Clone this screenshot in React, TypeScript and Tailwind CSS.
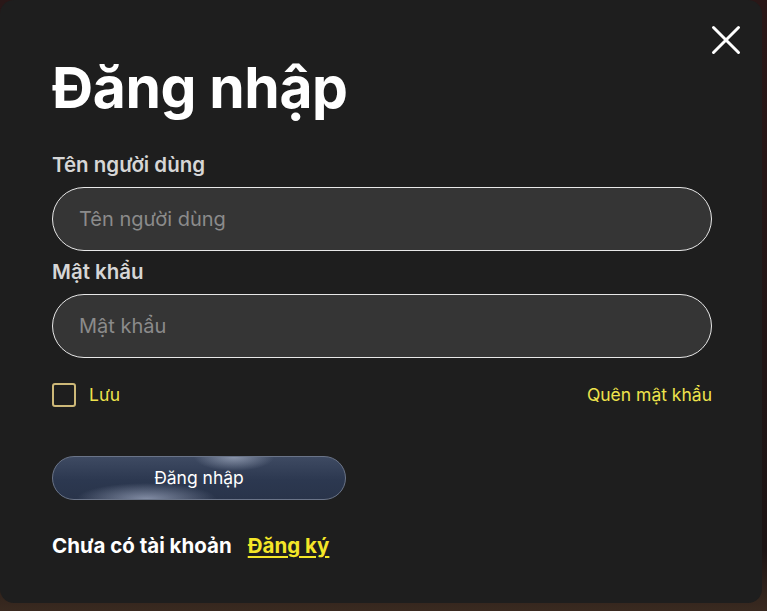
import { useState } from 'react';

export default function App() {
  const [remember, setRemember] = useState(false);
  const [username, setUsername] = useState('');
  const [password, setPassword] = useState('');

  return (
    <div className="h-[611px] w-[767px] overflow-hidden bg-[linear-gradient(180deg,#2a1717_0%,#1c1414_90%,#3a2a20_100%)] font-['Inter','Noto_Sans',sans-serif]">
      <div className="relative flex h-[603px] w-[762px] flex-col rounded-[14px] bg-[#1e1e1e] pl-[52px] pr-[50px] pt-[50px]">
        <button
          className="absolute right-[21px] top-[25px] flex h-[30px] w-[30px] items-center justify-center text-white"
          aria-label="Đóng"
        >
          <svg width="30" height="30" viewBox="0 0 30 30" fill="none" stroke="currentColor" strokeWidth="3" strokeLinecap="round">
            <path d="M2.5 2.5L27.5 27.5M27.5 2.5L2.5 27.5" />
          </svg>
        </button>

        <h1 className="text-[57px] font-bold leading-[76px] tracking-[-0.4px] text-white">Đăng nhập</h1>

        <label className="mt-[27px] text-[20.5px] font-semibold leading-[24px] text-[#d6d6d6]">Tên người dùng</label>
        <input
          className="mt-[10px] h-[64px] w-full rounded-full border border-[#e8e8e8] bg-[#353535] px-[26px] text-[20px] text-white outline-none placeholder:text-[#8b8b8b]"
          placeholder="Tên người dùng"
          value={username}
          onChange={(e) => setUsername(e.target.value)}
        />

        <label className="mt-[9px] text-[20.5px] font-semibold leading-[24px] text-[#d6d6d6]">Mật khẩu</label>
        <input
          type="password"
          className="mt-[10px] h-[64px] w-full rounded-full border border-[#e8e8e8] bg-[#353535] px-[26px] text-[20px] text-white outline-none placeholder:text-[#8b8b8b]"
          placeholder="Mật khẩu"
          value={password}
          onChange={(e) => setPassword(e.target.value)}
        />

        <div className="mt-[24px] flex items-center justify-between">
          <label className="flex cursor-pointer items-center gap-[13px]">
            <span
              className="h-[24px] w-[24px] rounded-[3px] border-2 border-[#cdb878]"
              onClick={() => setRemember(!remember)}
            >
              {remember && (
                <svg viewBox="0 0 20 20" className="h-full w-full text-[#f2e84b]" fill="none" stroke="currentColor" strokeWidth="2.5">
                  <path d="M4 10l4 4 8-8" />
                </svg>
              )}
            </span>
            <span className="text-[17.5px] text-[#efe34c]">Lưu</span>
          </label>
          <a href="#" className="text-[17.5px] text-[#efe34c]">Quên mật khẩu</a>
        </div>

        <button className="mt-[48px] h-[44px] w-[294px] rounded-full border border-[#6a7488] bg-[radial-gradient(ellipse_40px_14px_at_62%_0%,rgba(200,210,230,0.55),transparent),radial-gradient(ellipse_70px_16px_at_32%_100%,rgba(190,200,225,0.6),transparent),linear-gradient(180deg,#3e4a62_0%,#2c3850_55%,#29344a_100%)] text-[17.5px] text-white">
          Đăng nhập
        </button>

        <div className="mt-[31px] flex items-center gap-[16px] text-[20.5px] font-bold">
          <span className="text-white">Chưa có tài khoản</span>
          <a href="#" className="text-[#f4e628] underline underline-offset-[3px]">Đăng ký</a>
        </div>
      </div>
    </div>
  );
}
